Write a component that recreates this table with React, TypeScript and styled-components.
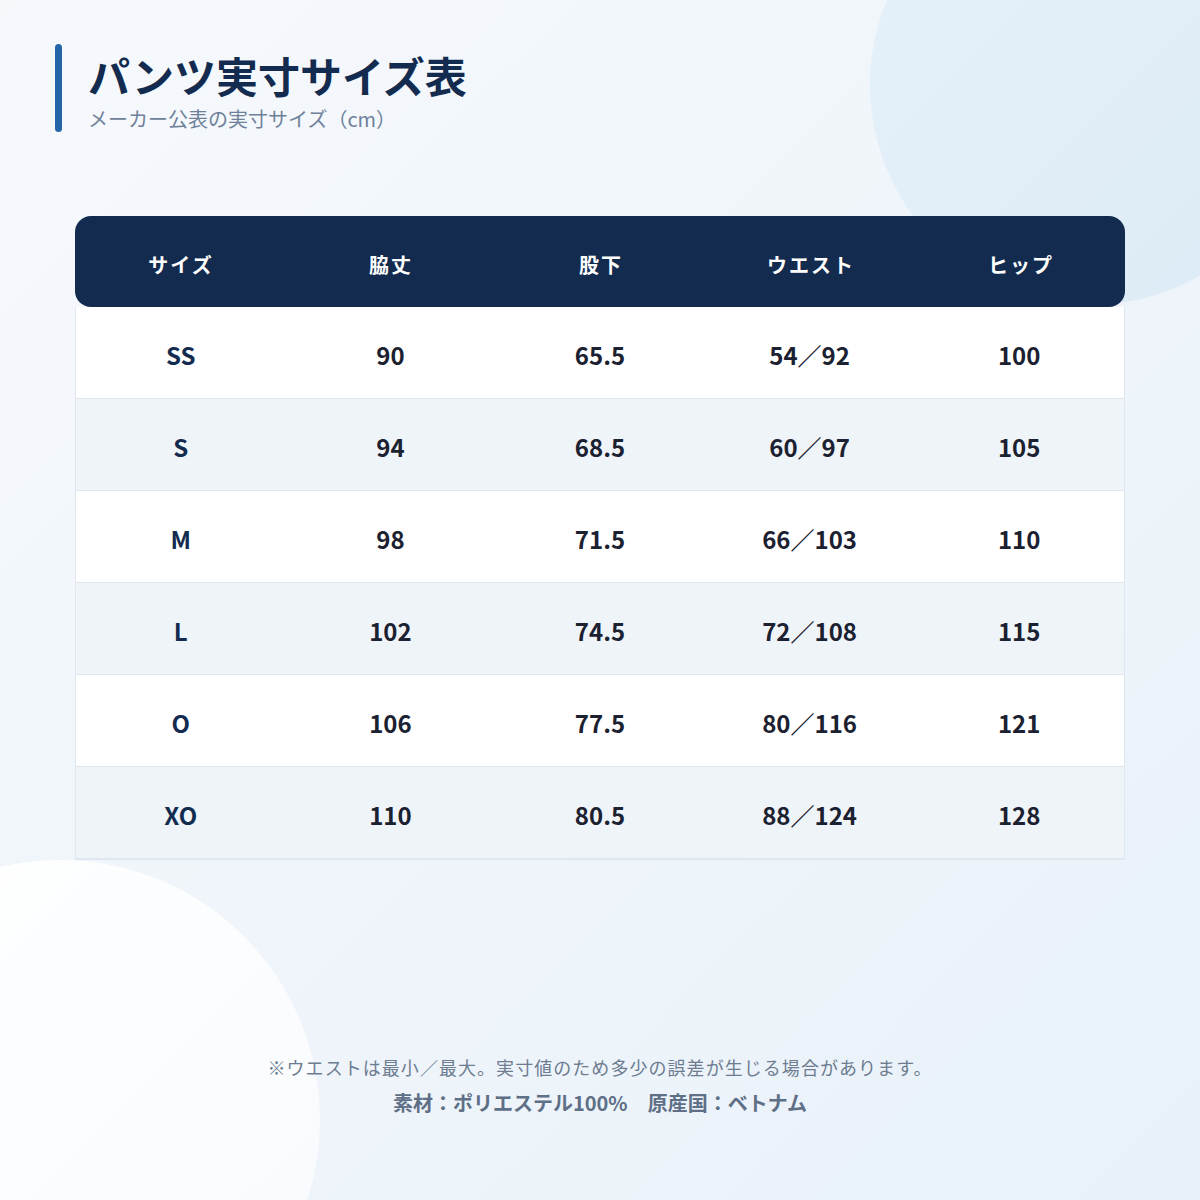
import React from "react";
import styled, { createGlobalStyle } from "styled-components";

const Global = createGlobalStyle`
  html, body { margin: 0; padding: 0; }
  body { font-family: "Noto Sans CJK JP", "Noto Sans", sans-serif; }
`;

const Page = styled.div`
  position: relative;
  width: 1200px;
  height: 1200px;
  overflow: hidden;
  background: linear-gradient(135deg, #f6f9fc 0%, #eef4fa 60%, #e8f1f9 100%);
  display: flex;
  flex-direction: column;
`;

const Circle = styled.div<{ $size: number; $bg: string }>`
  position: absolute;
  width: ${(p) => p.$size}px;
  height: ${(p) => p.$size}px;
  border-radius: 50%;
  background: ${(p) => p.$bg};
  z-index: 0;
`;

const TopCircle = styled(Circle)`
  left: 870px;
  top: -135px;
`;

const BottomCircle = styled(Circle)`
  left: -200px;
  top: 860px;
`;

const Content = styled.div`
  position: relative;
  z-index: 1;
  display: flex;
  flex-direction: column;
  padding: 44px 75px 0 55px;
`;

const Header = styled.header`
  display: flex;
  gap: 26px;
  align-items: stretch;
`;

const Accent = styled.div`
  width: 7px;
  height: 88px;
  border-radius: 4px;
  background: #2466a8;
`;

const Titles = styled.div`
  display: flex;
  flex-direction: column;
`;

const Title = styled.h1`
  margin: 0;
  font-size: 42px;
  line-height: 62px;
  font-weight: 700;
  color: #132b4f;
`;

const Subtitle = styled.p`
  margin: 0;
  font-size: 20px;
  line-height: 26px;
  color: #6f819a;
`;

const Table = styled.div`
  margin: 84px 0 0 20px;
  width: 1050px;
  display: flex;
  flex-direction: column;
`;

const HeadRow = styled.div`
  display: grid;
  grid-template-columns: repeat(5, 1fr);
  height: 91px;
  align-items: center;
  background: #132b4f;
  border-radius: 16px;
`;

const HeadCell = styled.div`
  text-align: center;
  color: #ffffff;
  font-size: 20px;
  font-weight: 700;
  letter-spacing: 2px;
  padding-top: 5px;
  padding-left: 2px;
`;

const Body = styled.div`
  border: 1px solid #dfe7f0;
  border-top: none;
  display: flex;
  flex-direction: column;
`;

const Row = styled.div<{ $alt: boolean }>`
  display: grid;
  grid-template-columns: repeat(5, 1fr);
  height: 91px;
  align-items: center;
  background: ${(p) => (p.$alt ? "#eff4f9" : "#ffffff")};
  border-bottom: 1px solid #dfe7f0;
`;

const Cell = styled.div<{ $first?: boolean }>`
  text-align: center;
  font-size: 24px;
  font-weight: 700;
  padding-top: 4px;
  color: ${(p) => (p.$first ? "#132b4f" : "#1b2130")};
`;

const Footer = styled.footer`
  position: relative;
  z-index: 1;
  margin-top: 193px;
  display: flex;
  flex-direction: column;
  align-items: center;
  gap: 8px;
`;

const Note = styled.p`
  margin: 0;
  font-size: 18px;
  line-height: 28px;
  color: #6d7c90;
  letter-spacing: 1.05px;
`;

const Spec = styled.p`
  margin: 0;
  font-size: 20px;
  line-height: 28px;
  font-weight: 700;
  color: #5e6f86;
`;

const heads = ["サイズ", "脇丈", "股下", "ウエスト", "ヒップ"];
const rows = [
  ["SS", "90", "65.5", "54／92", "100"],
  ["S", "94", "68.5", "60／97", "105"],
  ["M", "98", "71.5", "66／103", "110"],
  ["L", "102", "74.5", "72／108", "115"],
  ["O", "106", "77.5", "80／116", "121"],
  ["XO", "110", "80.5", "88／124", "128"],
];

export default function App() {
  return (
    <Page>
      <Global />
      <TopCircle $size={440} $bg="linear-gradient(135deg, #e6f1f9 0%, #dcebf6 100%)" />
      <BottomCircle $size={520} $bg="linear-gradient(135deg, #ffffff 0%, #f7fafd 100%)" />
      <Content>
        <Header>
          <Accent />
          <Titles>
            <Title>パンツ実寸サイズ表</Title>
            <Subtitle>メーカー公表の実寸サイズ（cm）</Subtitle>
          </Titles>
        </Header>
        <Table>
          <HeadRow>
            {heads.map((h) => (
              <HeadCell key={h}>{h}</HeadCell>
            ))}
          </HeadRow>
          <Body>
            {rows.map((r, i) => (
              <Row key={r[0]} $alt={i % 2 === 1}>
                {r.map((c, j) => (
                  <Cell key={j} $first={j === 0}>
                    {c}
                  </Cell>
                ))}
              </Row>
            ))}
          </Body>
        </Table>
      </Content>
      <Footer>
        <Note>※ウエストは最小／最大。実寸値のため多少の誤差が生じる場合があります。</Note>
        <Spec>素材：ポリエステル100%　原産国：ベトナム</Spec>
      </Footer>
    </Page>
  );
}
